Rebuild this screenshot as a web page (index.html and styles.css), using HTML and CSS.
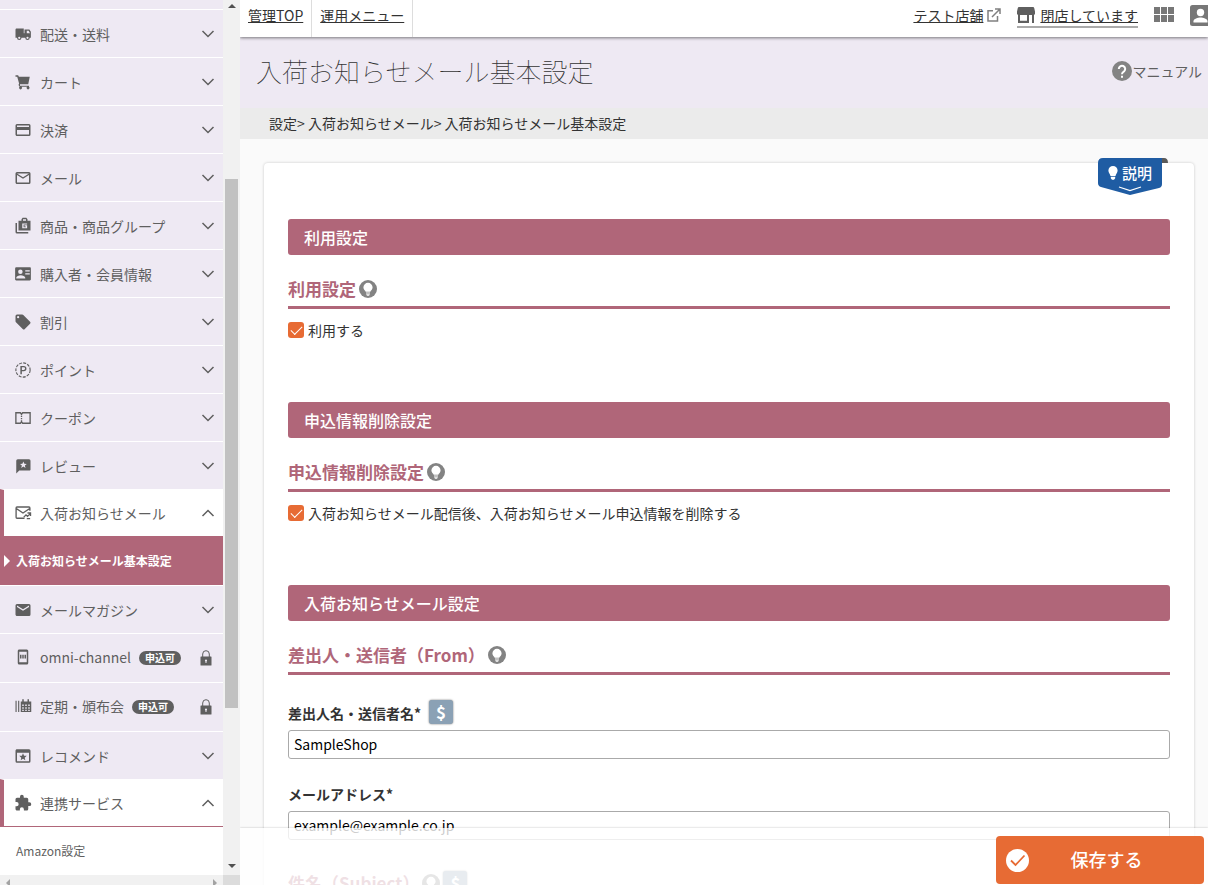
FILE: index.html
```html
<!DOCTYPE html>
<html lang="ja">
<head>
<meta charset="utf-8">
<title>入荷お知らせメール基本設定</title>
<link rel="stylesheet" href="styles.css">
</head>
<body>
<svg class="defs" aria-hidden="true">
  <symbol id="down" viewBox="0 0 14 8"><path d="M1.500 1l5.500 5.500L12.500 1" fill="none" stroke="currentColor" stroke-width="1.5"/></symbol>
  <symbol id="up" viewBox="0 0 14 8"><path d="M1.500 7L7 1.500 12.500 7" fill="none" stroke="currentColor" stroke-width="1.5"/></symbol>
  <symbol id="lock" viewBox="0 0 12 16"><path d="M2.700 7V4a3.300 3.300 0 0 1 6.600 0v3" fill="none" stroke="currentColor" stroke-width="1"/><path fill-rule="evenodd" d="M1 6.500h10q.5 0 .5.5v8q0 .5-.5.5H1q-.5 0-.5-.5V7q0-.5.5-.5zM6 9.500a1 1 0 0 0-.5 1.900V13h1v-1.600A1 1 0 0 0 6 9.500z"/></symbol>
  <symbol id="bulb" viewBox="0 0 18 18"><circle cx="9" cy="9" r="9" fill="#838383"/><path d="M9 2.800a4.600 4.600 0 0 0-4.600 4.600c0 2 1.800 2.900 2.300 4.400h4.600c.5-1.500 2.300-2.400 2.300-4.400A4.600 4.600 0 0 0 9 2.800zM7 12.500h4v1H7zM7.300 14.200h3.400v.8l-1 .8H8.300l-1-.8z" fill="#fff"/></symbol>
</svg>
<div class="app">
  <aside class="sidebar">
    <nav class="menu">
      <div class="menu-cut"></div>
      <button class="item"><svg class="icon" viewBox="0 0 24 24"><path d="M20.500 6H14v5h-1V4.500H3.500C2.700 4.500 2 5.200 2 6v11h2a3 3 0 0 0 6 0h5a3 3 0 0 0 6 0h1.500V9zM7 18.500a1.500 1.500 0 1 1 0-3 1.500 1.500 0 0 1 0 3zm11 0a1.500 1.500 0 1 1 0-3 1.500 1.500 0 0 1 0 3zM17 11V7.500h2.500l1.800 3.500z"/></svg><span>配送・送料</span><svg class="chev"><use href="#down"/></svg></button>
      <button class="item"><svg class="icon" viewBox="0 0 24 24"><path d="M2 3h3.500l1 2H21l-2 10H8v2h12v1.200a2 2 0 1 1-2.500 0H10a2 2 0 1 1-2.500 0L6 16l.8-2L4.300 5H2z"/></svg><span>カート</span><svg class="chev"><use href="#down"/></svg></button>
      <button class="item"><svg class="icon" viewBox="0 0 24 24"><path d="M20 4H4a2 2 0 0 0-2 2v12c0 1.100.9 2 2 2h16a2 2 0 0 0 2-2V6a2 2 0 0 0-2-2zm0 14H4v-6h16v6zm0-10H4V6h16v2z"/></svg><span>決済</span><svg class="chev"><use href="#down"/></svg></button>
      <button class="item"><svg class="icon" viewBox="0 0 24 24"><path d="M20 4H4a2 2 0 0 0-2 2v12c0 1.100.9 2 2 2h16a2 2 0 0 0 2-2V6a2 2 0 0 0-2-2zm0 14H4V8l8 5 8-5v10zm-8-7L4 6h16l-8 5z"/></svg><span>メール</span><svg class="chev"><use href="#down"/></svg></button>
      <button class="item"><svg class="icon" viewBox="0 0 24 24"><path fill-rule="evenodd" d="M2 8h2v12h15v2H4a2 2 0 0 1-2-2zM6 5h4V3l1.500-2h5L18 3v2h4v13H6zm6 0h4V3h-4zm5.500 3.500H11v6.500h6.500v-4H14v1.500h1.800v1h-3v-3.500h4.700z"/></svg><span>商品・商品グループ</span><svg class="chev"><use href="#down"/></svg></button>
      <button class="item"><svg class="icon" viewBox="0 0 24 24"><path fill-rule="evenodd" d="M21 3H3a1.500 1.500 0 0 0-1.500 1.500v14.500c0 1 .5 1.500 1.500 1.500h18c1 0 1.500-.5 1.500-1.500V4.500c0-1-.5-1.500-1.500-1.500zM8.500 6a3 3 0 1 1 0 6 3 3 0 0 1 0-6zM15 18H3v-1c0-2 3.500-3.500 6-3.500s6 1.500 6 3.500zM15 7h6v1.500h-6zM15 11h6v1.500h-6z"/></svg><span>購入者・会員情報</span><svg class="chev"><use href="#down"/></svg></button>
      <button class="item"><svg class="icon" viewBox="0 0 24 24"><path d="M21.410 11.580l-9-9A2 2 0 0 0 11 2H4a2 2 0 0 0-2 2v7c0 .55.220 1.050.590 1.420l9 9a2 2 0 0 0 2.820 0l7-7a2 2 0 0 0 0-2.840zM5.500 7a1.500 1.500 0 1 1 0-3 1.500 1.500 0 0 1 0 3z"/></svg><span>割引</span><svg class="chev"><use href="#down"/></svg></button>
      <button class="item"><svg class="icon" viewBox="0 0 24 24"><circle cx="12" cy="12" r="9.500" fill="none" stroke="currentColor" stroke-width="1.500" stroke-dasharray="4 1.600"/><path fill-rule="evenodd" d="M8.500 6.500H13a3.600 3.600 0 0 1 0 7.200h-2.500v4h-2zm2 1.800v3.600H13a1.800 1.800 0 0 0 0-3.600z"/></svg><span>ポイント</span><svg class="chev"><use href="#down"/></svg></button>
      <button class="item"><svg class="icon" viewBox="0 0 24 24"><path d="M2.500 5h6l1.500 2 1.500-2h10v14h-10L10 17l-1.500 2h-6zM10 9v1.500M10 12v1.500M10 15v2" fill="none" stroke="currentColor" stroke-width="1.800"/></svg><span>クーポン</span><svg class="chev"><use href="#down"/></svg></button>
      <button class="item"><svg class="icon" viewBox="0 0 24 24"><path fill-rule="evenodd" d="M20 3H5a2 2 0 0 0-2 2v17l4-4h13.500c1 0 1.500-.5 1.500-1.500V5a2 2 0 0 0-2-2zm-7.500 3l1.300 3 3.200.3-2.500 2 .8 3.200-2.800-1.700-2.800 1.700.8-3.200-2.500-2 3.200-.3z"/></svg><span>レビュー</span><svg class="chev"><use href="#down"/></svg></button>
      <button class="item open"><svg class="icon" viewBox="0 0 24 24"><path d="M14 19H4c-.8 0-1.200-.4-1.200-1.200V5.200C2.800 4.400 3.200 4 4 4h16c.8 0 1.200.4 1.200 1.200V9M3 6l9 6 9-6M13 17.500l3-3 2 2 4-4M18 12h4v4M17 19.500h4.500" fill="none" stroke="currentColor" stroke-width="1.800"/></svg><span>入荷お知らせメール</span><svg class="chev"><use href="#up"/></svg></button>
      <a class="current" href="#"><svg viewBox="0 0 6 12"><path d="M0 0l6 6-6 6z"/></svg>入荷お知らせメール基本設定</a>
      <button class="item"><svg class="icon" viewBox="0 0 24 24"><path d="M20 4H4a2 2 0 0 0-2 2v12c0 1.100.9 2 2 2h16a2 2 0 0 0 2-2V6a2 2 0 0 0-2-2zm0 4l-8 5-8-5V6l8 5 8-5v2z"/></svg><span>メールマガジン</span><svg class="chev"><use href="#down"/></svg></button>
      <button class="item tall"><svg class="icon" viewBox="0 0 24 24"><path fill-rule="evenodd" d="M7 2h10a2 2 0 0 1 2 2v16a2 2 0 0 1-2 2H7a2 2 0 0 1-2-2V4c0-1.100.9-2 2-2zm0 3v14h10V5z"/><path d="M8 9h2v5H8zM11 9h2v5h-2zM14 9h2v5h-2z"/></svg><span>omni-channel</span><span class="tag">申込可</span><svg class="lock"><use href="#lock"/></svg></button>
      <button class="item tall"><svg class="icon" viewBox="0 0 24 24"><path fill-rule="evenodd" d="M2 5h1.500v15H2zM5.500 5H7v15H5.500zM9 6h2V3h2v3h5V3h2v3h3v14H9zm2 4v2h2v-2zm4 0v2h2v-2zm4 0v2h2v-2zm-8 3.500v2h2v-2zm4 0v2h2v-2zm4 0v2h2v-2zM11 17v1.500h2V17zm4 0v1.500h2V17zm4 0v1.500h2V17z"/></svg><span>定期・頒布会</span><span class="tag">申込可</span><svg class="lock"><use href="#lock"/></svg></button>
      <button class="item"><svg class="icon" viewBox="0 0 24 24"><path fill-rule="evenodd" d="M4 3h16a2 2 0 0 1 2 2v14a2 2 0 0 1-2 2H4a2 2 0 0 1-2-2V5c0-1.100.9-2 2-2zm0 4.500V19h16V7.500z"/><path d="M12 8.200l1.400 3.300 3.600.3-2.700 2.400.8 3.500-3.100-1.900-3.100 1.900.8-3.500L7 11.800l3.600-.3z"/></svg><span>レコメンド</span><svg class="chev"><use href="#down"/></svg></button>
      <button class="item open lined"><svg class="icon" viewBox="0 0 24 24"><path d="M20.500 11H19V7a2 2 0 0 0-2-2h-4V3.500a2.500 2.500 0 0 0-5 0V5H4a2 2 0 0 0-2 2v3.800h1.500a2.700 2.700 0 0 1 0 5.400H2V20c0 1.100.9 2 2 2h3.800v-1.500a2.700 2.700 0 0 1 5.400 0V22H17a2 2 0 0 0 2-2v-4h1.500a2.500 2.500 0 0 0 0-5z"/></svg><span>連携サービス</span><svg class="chev"><use href="#up"/></svg></button>
      <a class="sub" href="#">Amazon設定</a>
    </nav>
    <div class="vbar"><svg viewBox="0 0 8 4"><path d="M0 4l4-4 4 4z"/></svg><div class="track"><i class="before"></i><i class="thumb"></i><i class="after"></i></div><svg viewBox="0 0 8 4"><path d="M0 0l4 4 4-4z"/></svg></div>
    <div class="hbar"><svg viewBox="0 0 4 8"><path d="M4 0L0 4l4 4z"/></svg><svg viewBox="0 0 4 8"><path d="M0 0l4 4-4 4z"/></svg></div>
    <div class="corner"></div>
  </aside>

  <main class="main">
    <header class="topbar">
      <a class="tab" href="#">管理TOP</a>
      <a class="tab" href="#">運用メニュー</a>
      <div class="tools">
        <a class="shop" href="#"><span>テスト店舗</span><svg width="14" height="14" viewBox="0 0 14 14" fill="none" stroke="#808080" stroke-width="1.500"><path d="M6 2.800H1V13h9.500V8M8 1h5v5M13 1L5 9"/></svg></a>
        <a class="status" href="#"><svg width="18" height="16" viewBox="0 0 18 16" fill="#5f5f5f"><path fill-rule="evenodd" d="M2 0h14q1 0 1.200 1L18 4.500V7.500h-1V16h-2V8h-3v8H1V7.500H0V4.500L.8 1Q1 0 2 0zM3 8v5.800h7V8z"/></svg><span>閉店しています</span></a>
        <button class="tool" aria-label="アプリ"><svg width="20" height="16" viewBox="0 0 20 16" fill="#777"><path d="M0 0h6v7H0zM7 0h6v7H7zM14 0h6v7h-6zM0 8h6v7H0zM7 8h6v7H7zM14 8h6v7h-6z"/></svg></button>
        <button class="tool" aria-label="アカウント"><svg width="18" height="21" viewBox="0 0 18 21"><rect width="21" height="21" rx="2.500" fill="#777"/><circle cx="10.500" cy="7.500" r="3.700" fill="#fff"/><path d="M3.500 17.500v-1.300c0-2.400 4.500-3.700 7-3.700s7 1.300 7 3.700v1.300z" fill="#fff"/></svg></button>
      </div>
    </header>
    <div class="heading">
      <h1>入荷お知らせメール基本設定</h1>
      <a class="manual" href="#"><svg width="20" height="20" viewBox="0 0 20 20"><circle cx="10" cy="10" r="10" fill="#838383"/><path d="M6.800 8a3.200 3.200 0 1 1 5.400 2.300C11 11.300 10 11.700 10 13.300" fill="none" stroke="#fff" stroke-width="2"/><path d="M9 14.700h2v2H9z" fill="#fff"/></svg>マニュアル</a>
    </div>
    <div class="crumbs">設定&gt; 入荷お知らせメール&gt; 入荷お知らせメール基本設定</div>
    <form class="card">
      <button type="button" class="help"><svg class="ribbon" viewBox="0 0 70 37"><path d="M64 0h2q4 0 4 5h-6z" fill="#5a5a5a"/><path d="M5 0h59v26q0 3-3 4l-29 7-29-8q-3-1-3-4V5q0-5 5-5z" fill="#1f5ca3"/><path d="M21 29l11 3.500L43 29" fill="none" stroke="#fff" stroke-width="1.300"/></svg><span class="help-text"><svg width="10" height="14" viewBox="0 0 10 14" fill="#fff"><path d="M5 0a4.600 4.600 0 0 0-4.600 4.600C.4 7 2 8 2.500 10h5C8 8 9.600 7 9.600 4.600A4.600 4.600 0 0 0 5 0zM2.800 10.800h4.400v1.500L6 13.700H4l-1.200-1.400z"/></svg>説明</span></button>
      <section>
        <h2>利用設定</h2>
        <h3>利用設定<svg class="bulb"><use href="#bulb"/></svg></h3>
        <label class="check"><input type="checkbox" checked>利用する</label>
      </section>
      <section>
        <h2>申込情報削除設定</h2>
        <h3>申込情報削除設定<svg class="bulb"><use href="#bulb"/></svg></h3>
        <label class="check"><input type="checkbox" checked>入荷お知らせメール配信後、入荷お知らせメール申込情報を削除する</label>
      </section>
      <section>
        <h2>入荷お知らせメール設定</h2>
        <h3>差出人・送信者（From）<svg class="bulb"><use href="#bulb"/></svg></h3>
        <div class="field first">
          <div class="label-row"><label for="sender">差出人名・送信者名*</label><button type="button" class="var">$</button></div>
          <input id="sender" type="text" value="SampleShop">
        </div>
        <div class="field">
          <div class="label-row"><label for="mail">メールアドレス*</label></div>
          <input id="mail" type="text" value="example@example.co.jp">
        </div>
        <h3 class="subject">件名（Subject）<svg class="bulb"><use href="#bulb"/></svg><button type="button" class="var">$</button></h3>
      </section>
    </form>
    <footer class="actions"><button class="save"><svg width="23" height="23" viewBox="0 0 23 23"><circle cx="11.500" cy="11.500" r="11.500" fill="#fff"/><path d="M5 11.500l4.500 4.500 9-9.500" fill="none" stroke="#e76b34" stroke-width="1.800"/></svg><span>保存する</span></button></footer>
  </main>
</div>
</body>
</html>
```
FILE: styles.css
```css
* { box-sizing: border-box; }
body { margin: 0; font: 14px/20px "Noto Sans CJK JP", sans-serif; color: #333; background: #fafafa; }
button, input { font: inherit; color: inherit; }
button { border: 0; padding: 0; background: none; cursor: pointer; }
a { color: inherit; }
svg { flex: none; }
.defs { position: absolute; width: 0; height: 0; }
.app { display: grid; grid-template-columns: 240px minmax(0, 1fr); height: 100vh; overflow: hidden; }

.sidebar { display: grid; grid-template: minmax(0, 1fr) 10px / minmax(0, 1fr) 17px; height: 100vh; color: #5f5f5f; }
.sidebar svg { fill: currentColor; }
.menu { display: flex; flex-direction: column; overflow: hidden; background: #fff; }
.menu-cut { flex: none; height: 9px; background: #eee9f3; }
.item { flex: none; display: flex; align-items: center; gap: 8px; height: 48px; padding: 0 8px 0 14px; border-top: 1px solid #fff; background: #eee9f3; text-align: left; }
.item.tall { height: 49px; padding-bottom: 2px; }
.item.open { height: 47px; padding-left: 10px; border-left: 4px solid #b06679; background: #fff; }
.item.lined { height: 48px; border-bottom: 1px solid #b06679; }
.icon { width: 18px; height: 18px; }
.chev { width: 14px; height: 8px; margin-left: auto; }
.lock { width: 12px; height: 16px; margin: 2px 3px 0 auto; }
.tag { height: 14px; margin-top: 2px; padding: 0 6px; border-radius: 7px; background: #5f5f5f; color: #fff; font-size: 10px; font-weight: 700; line-height: 14px; }
.current { flex: none; display: flex; align-items: center; gap: 6px; height: 49px; padding-left: 4px; background: #b06679; color: #fff; font-size: 12px; font-weight: 700; text-decoration: none; }
.current svg { width: 6px; height: 12px; }
.sub { flex: none; padding: 14px 16px; font-size: 12px; text-decoration: none; }
.vbar { display: flex; flex-direction: column; align-items: center; padding: 4px 0 7px; background: #f1f1f1; color: #505050; }
.vbar svg { width: 8px; height: 4px; }
.track { flex: 1; display: flex; flex-direction: column; width: 13px; }
.before { flex: 171; }
.thumb { flex: 529; background: #c1c1c1; }
.after { flex: 156; }
.hbar { display: flex; justify-content: space-between; padding: 4px 6px 0; overflow: hidden; background: #f1f1f1; color: #a3a3a3; }
.hbar svg { width: 4px; height: 8px; }
.corner { background: #dcdcdc; }

.main { position: relative; display: flex; flex-direction: column; height: 100vh; overflow: hidden; }
.topbar { position: relative; z-index: 1; flex: none; display: flex; height: 37px; background: #fff; box-shadow: 0 1px 3px rgba(0, 0, 0, .5); }
.tab { padding: 5px 8px; border-right: 1px solid #ddd; }
.tools { display: flex; align-items: flex-start; gap: 16px; margin-left: auto; padding-top: 3px; }
.shop, .status { display: flex; align-items: center; gap: 4px; height: 25px; border-bottom: 2px solid transparent; text-decoration: none; }
.shop span, .status span { text-decoration: underline; }
.status { gap: 5px; border-bottom-color: #aaa; }
.tool { display: flex; height: 24px; align-items: center; }
.heading { flex: none; display: flex; align-items: center; justify-content: space-between; height: 71px; padding: 0 6px 3px 16px; background: #eee9f3; }
h1 { margin: 0; font-size: 26px; font-weight: 100; line-height: 40px; }
.manual { display: flex; align-items: center; color: #5f5f5f; text-decoration: none; }
.crumbs { flex: none; padding: 5px 29px 6px; background: #ebebeb; }

.card { position: relative; flex: none; margin: 24px 14px 0 24px; padding: 56px 24px 24px; border-radius: 4px; background: #fff; box-shadow: 0 0 3px rgba(0, 0, 0, .2); }
.help { position: absolute; top: -5px; right: 26px; width: 70px; height: 37px; color: #fff; font-size: 15px; font-weight: 500; }
.ribbon { display: block; width: 70px; height: 37px; }
.help-text { position: absolute; top: 5px; left: 10px; display: flex; align-items: center; gap: 4px; }
h2 { margin: 0; padding: 6px 16px; border-radius: 3px; background: #b06679; color: #fff; font-size: 16px; font-weight: 500; line-height: 24px; }
h3 { display: flex; align-items: center; gap: 3px; margin: 0; padding: 22px 0 5px; border-bottom: 3px solid #b06679; color: #b06679; font-size: 17px; font-weight: 700; line-height: 24px; }
.bulb { width: 18px; height: 18px; }
.check { display: flex; align-items: center; gap: 4px; margin: 11px 0 62px; }
.check input { appearance: none; display: grid; place-items: center; width: 16px; height: 16px; margin: 0; border-radius: 3px; background: #e76b34; }
.check input:checked::before { content: ""; width: 10px; height: 5px; margin-bottom: 3px; border: solid #fff; border-width: 0 0 1px 1px; rotate: -45deg; }
.field { margin-top: 22px; }
.field.first { margin-top: 25px; }
.label-row { display: flex; align-items: flex-end; gap: 8px; padding-bottom: 6px; font-weight: 700; min-height: 30px; }
.label-row label { margin-bottom: 1px; }
.var { width: 24px; height: 24px; border-radius: 3px; background: #8ba1b5; box-shadow: 0 0 2px rgba(0, 0, 0, .6); color: #fff; font-size: 17px; font-weight: 700; line-height: 22px; }
.field input { display: block; width: 100%; height: 29px; padding: 0 5px 1px; border: 1px solid #aaa; border-radius: 3px; background: #fff; color: #000; }
.subject { margin-top: 9px; }
.actions { position: absolute; inset: auto 0 0; display: flex; justify-content: flex-end; padding: 8px 4px 1px; background: rgba(255, 255, 255, .8); box-shadow: 0 0 2px rgba(0, 0, 0, .25); }
.save { display: flex; align-items: center; width: 208px; height: 48px; padding: 0 10px; border-radius: 4px; background: #e76b34; color: #fff; font-size: 18px; font-weight: 500; }
.save span { flex: 1; padding: 0 10px 2px 0; }
```
